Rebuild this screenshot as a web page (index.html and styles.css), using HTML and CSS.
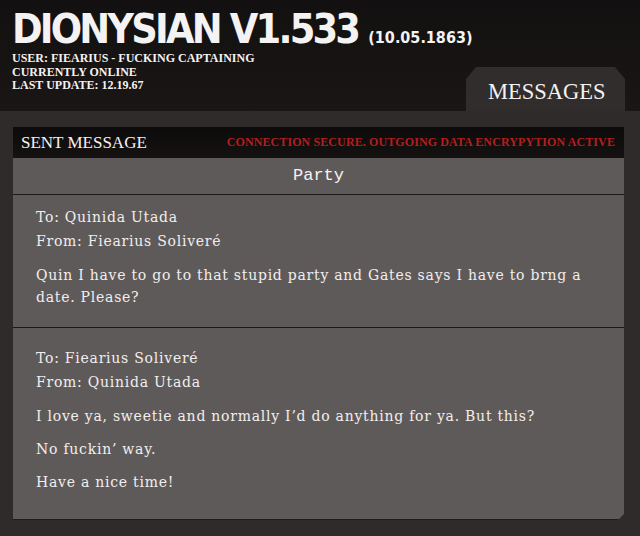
FILE: index.html
```html
<!DOCTYPE html>
<html>
<head>
<meta charset="utf-8">
<link rel="stylesheet" href="styles.css">
</head>
<body>
<header class="top">
  <div class="brand">
    <h1 class="title">DIONYSIAN V1.533 <span class="date">(10.05.1863)</span></h1>
    <div class="info">USER: FIEARIUS - FUCKING CAPTAINING</div>
    <div class="info">CURRENTLY ONLINE</div>
    <div class="info">LAST UPDATE: 12.19.67</div>
  </div>
  <div class="tab">MESSAGES</div>
</header>
<main class="panel">
  <div class="bar">
    <span class="bar-title">SENT MESSAGE</span>
    <span class="bar-status">CONNECTION SECURE. OUTGOING DATA ENCRYPYTION ACTIVE</span>
  </div>
  <div class="subject">Party</div>
  <section class="msg">
    <div class="meta">To: Quinida Utada</div>
    <div class="meta">From: Fiearius Soliveré</div>
    <p>Quin I have to go to that stupid party and Gates says I have to brng a date. Please?</p>
  </section>
  <section class="msg">
    <div class="meta">To: Fiearius Soliveré</div>
    <div class="meta">From: Quinida Utada</div>
    <p>I love ya, sweetie and normally I’d do anything for ya. But this?</p>
    <p>No fuckin’ way.</p>
    <p>Have a nice time!</p>
  </section>
</main>
</body>
</html>
```
FILE: styles.css
```css
html, body {
  margin: 0;
  padding: 0;
}
body {
  background: #2f2b2a;
  width: 640px;
  height: 536px;
  overflow: hidden;
  font-family: "DejaVu Serif", serif;
}
.top {
  height: 111px;
  background: linear-gradient(180deg, #121010 0%, #1a1615 100%);
  display: flex;
  align-items: flex-end;
  padding-left: 12px;
  padding-right: 15px;
  box-sizing: border-box;
}
.brand {
  align-self: flex-start;
  color: #f4f2f2;
  flex: 0 1 auto;
  min-width: 0;
}
.title {
  margin: 15px 0 0 0;
  font-family: "DejaVu Sans", sans-serif;
  font-stretch: condensed;
  font-weight: bold;
  font-size: 41px;
  line-height: 28px;
  letter-spacing: -2.8px;
  white-space: nowrap;
}
.date {
  font-size: 16px;
  letter-spacing: 0;
}
.info {
  font-family: "Liberation Serif", serif;
  font-weight: bold;
  font-size: 12px;
  line-height: 13.5px;
}
.tab {
  margin-left: auto;
  flex: 0 0 159px;
  height: 44px;
  background: #302d2c;
  clip-path: polygon(10px 0, 149px 0, 159px 12px, 159px 100%, 0 100%, 0 12px);
  color: #f4f2f2;
  font-family: "Liberation Serif", serif;
  font-size: 22.5px;
  line-height: 1;
  padding-top: 14px;
  padding-left: 22px;
  box-sizing: border-box;
  white-space: nowrap;
}
.panel {
  margin: 16px 0 0 13px;
  width: 611px;
  background: #5f5a5a;
  border-bottom: 1px solid #1e1b1b;
  padding-bottom: 7px;
  clip-path: polygon(0 0, 100% 0, 100% calc(100% - 6px), calc(100% - 6px) 100%, 0 100%);
  color: #f1eeee;
}
.bar {
  height: 31px;
  background: linear-gradient(180deg, #0c0a0a 0%, #161212 100%);
  display: flex;
  align-items: center;
  justify-content: space-between;
  padding: 0 9px 0 8px;
}
.bar-title {
  font-family: "Liberation Serif", serif;
  font-size: 17px;
  color: #f4f2f2;
}
.bar-status {
  font-family: "Liberation Serif", serif;
  font-weight: bold;
  font-size: 12px;
  color: #b21f1f;
  letter-spacing: 0.1px;
}
.subject {
  height: 36px;
  border-bottom: 1px solid #1c1919;
  text-align: center;
  font-family: "Liberation Mono", monospace;
  font-size: 17px;
  line-height: 36px;
  color: #f4f2f2;
}
.msg {
  padding: 18px 23px 19px;
  border-bottom: 1px solid #1c1919;
  font-size: 14px;
  letter-spacing: 0.75px;
}
.msg:first-of-type {
  padding-top: 10px;
}
.msg:last-of-type {
  border-bottom: none;
}
.meta {
  line-height: 24px;
}
.msg p {
  margin: 11px 0 0 0;
  line-height: 22px;
}
```
